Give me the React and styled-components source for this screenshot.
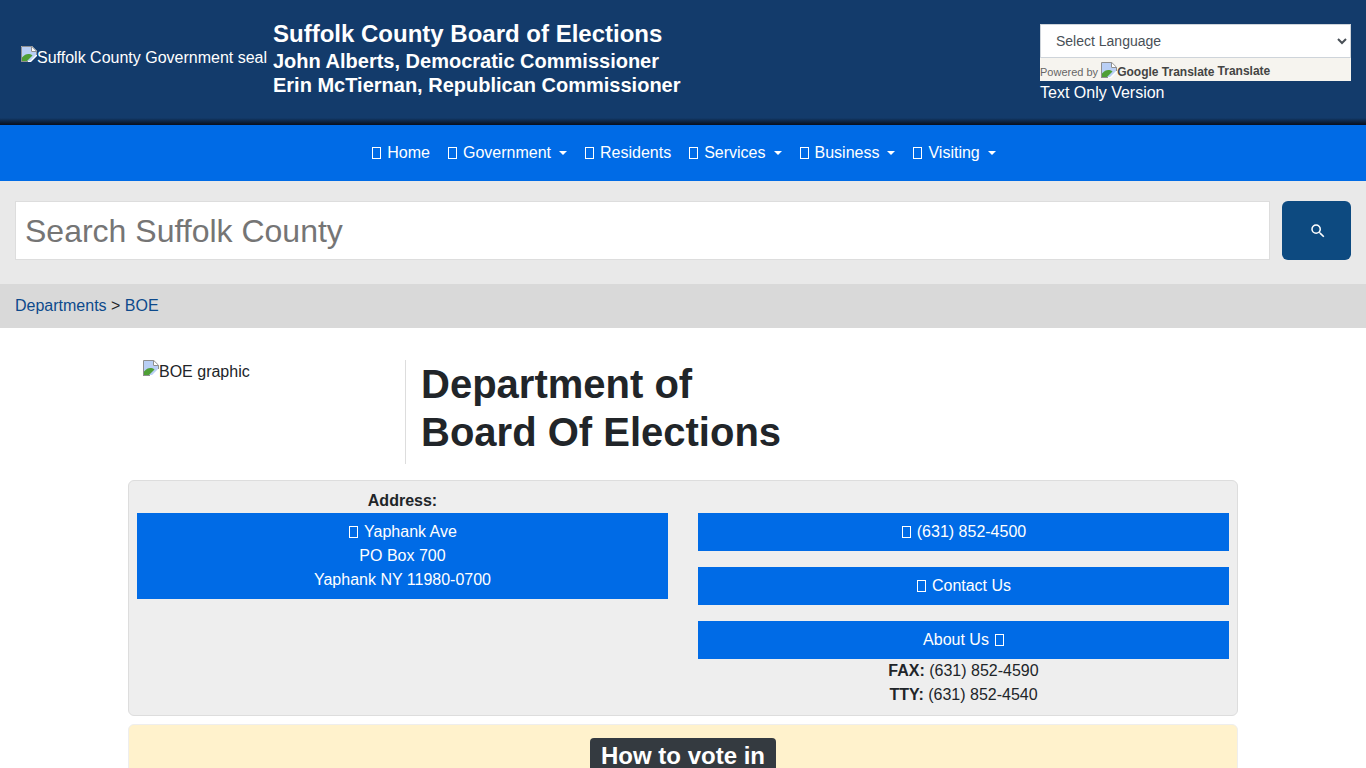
import React from "react"
import styled, { createGlobalStyle } from "styled-components"

const NAV_ITEMS = [
  { label: "Home" },
  { label: "Government", caret: true },
  { label: "Residents" },
  { label: "Services", caret: true },
  { label: "Business", caret: true },
  { label: "Visiting", caret: true },
]

// the browser's broken image marker, the reference has no loaded pictures
const BrokenImage = () => (
  <BrokenIcon viewBox="0 0 16 16" aria-hidden="true">
    <path d="M0 0h11l5 5v5l-6 6H0z" fill="#fff" />
    <path d="M1 1h9v5h5v3l-6 6H1z" fill="#b9cff5" />
    <path d="M1 15v-3.500C3.500 8.500 6 7.500 8.500 8c1.200.3 2 .8 3 1.500L6 15z" fill="#4f9f35" />
    <path d="M.5 16V.5h10.300l4.700 4.700V9M10.500 .5v5h5" fill="none" stroke="#8f8f8f" />
    <path d="M.5 15.500H7" fill="none" stroke="#8f8f8f" />
  </BrokenIcon>
)

const App = () => {
  return (
    <Page>
      <GlobalStyle />
      <Header>
        <Brand>
          <Seal>
            <BrokenImage />
            Suffolk County Government seal
          </Seal>
          <Titles>
            <Title>Suffolk County Board of Elections</Title>
            <Subtitle>John Alberts, Democratic Commissioner</Subtitle>
            <Subtitle>Erin McTiernan, Republican Commissioner</Subtitle>
          </Titles>
        </Brand>
        <HeaderTools>
          <LanguageSelect defaultValue="">
            <option value="">Select Language</option>
            <option value="es">Spanish</option>
          </LanguageSelect>
          <PoweredBy>
            Powered by <BrokenImage />
            <strong>Google Translate</strong> <TranslateWord>Translate</TranslateWord>
          </PoweredBy>
          <TextOnly href="#">Text Only Version</TextOnly>
        </HeaderTools>
      </Header>

      <Nav>
        {NAV_ITEMS.map((item) => (
          <NavLink key={item.label} href="#" $caret={item.caret}>
            <Tofu />
            {item.label}
          </NavLink>
        ))}
      </Nav>

      <SearchBar>
        <SearchInput placeholder="Search Suffolk County" />
        <SearchButton aria-label="Search">
          <svg width="18" height="18" viewBox="0 0 24 24" fill="#fff">
            <path d="M15.500 14h-.79l-.28-.27A6.471 6.471 0 0 0 16 9.500 6.500 6.500 0 1 0 9.500 16c1.610 0 3.090-.59 4.230-1.570l.27.28v.79l5 4.990L20.490 19l-4.990-5zm-6 0C7.010 14 5 11.990 5 9.500S7.010 5 9.500 5 14 7.010 14 9.500 11.990 14 9.500 14z" />
          </svg>
        </SearchButton>
      </SearchBar>

      <Breadcrumb>
        <a href="#">Departments</a> &gt; <a href="#">BOE</a>
      </Breadcrumb>

      <Main>
        <DeptHeader>
          <DeptGraphic>
            <BrokenImage />
            BOE graphic
          </DeptGraphic>
          <DeptTitle>
            Department of
            <br />
            Board Of Elections
          </DeptTitle>
        </DeptHeader>

        <ContactCard>
          <Column>
            <AddressLabel>Address:</AddressLabel>
            <BlueLink href="#">
              <Tofu />
              Yaphank Ave
              <br />
              PO Box 700
              <br />
              Yaphank NY 11980-0700
            </BlueLink>
          </Column>
          <Column>
            <LinkStack>
              <BlueLink href="#">
                <Tofu />
                (631) 852-4500
              </BlueLink>
              <BlueLink href="#">
                <Tofu />
                Contact Us
              </BlueLink>
              <BlueLink href="#">
                About Us
                <Tofu $after />
              </BlueLink>
            </LinkStack>
            <div>
              <div>
                <b>FAX:</b> (631) 852-4590
              </div>
              <div>
                <b>TTY:</b> (631) 852-4540
              </div>
            </div>
          </Column>
        </ContactCard>

        <NoticeCard>
          <NoticeBadge>How to vote in</NoticeBadge>
        </NoticeCard>
      </Main>
    </Page>
  )
}

export default App

const GlobalStyle = createGlobalStyle`
  html, body {
    margin: 0;
    padding: 0;
    background: #fff;
  }
  * {
    box-sizing: border-box;
  }
`

const Page = styled.div`
  height: 768px;
  overflow: hidden;
  font-family: "Liberation Sans", Arial, sans-serif;
  font-size: 16px;
  line-height: 24px;
  color: #212529;
`

const Header = styled.header`
  display: flex;
  justify-content: space-between;
  align-items: flex-start;
  height: 125px;
  padding: 24px 15px 0 21px;
  background: linear-gradient(#133b6b 118px, #0a1a30 123px, #0a0f1c 125px);
  color: #fff;
`

const Brand = styled.div`
  display: flex;
  align-items: center;
  height: 72px;
`

const BrokenIcon = styled.svg`
  display: inline-block;
  width: 16px;
  height: 16px;
  vertical-align: 1px;
`

const Seal = styled.div`
  width: 252px;
  margin-top: -4px;
  white-space: nowrap;
`

const Titles = styled.div`
  display: flex;
  flex-direction: column;
  font-weight: bold;
`

const Title = styled.div`
  font-size: 24px;
  line-height: 24px;
  margin-top: -2px;
  margin-bottom: 3px;
`

const Subtitle = styled.div`
  font-size: 20px;
  line-height: 24px;
`

const HeaderTools = styled.div`
  display: flex;
  flex-direction: column;
  width: 311px;
`

const LanguageSelect = styled.select`
  width: 100%;
  height: 34px;
  padding: 0 11px;
  background: #fff;
  border: 1px solid #ced4da;
  color: #495057;
  font-family: inherit;
  font-size: 14px;
`

const PoweredBy = styled.div`
  height: 23px;
  background: #f6f4ef;
  color: #666;
  font-size: 11px;
  line-height: 27px;
  white-space: nowrap;
  strong {
    color: #444;
    font-size: 12px;
  }
  svg {
    vertical-align: -2px;
  }
`

const TranslateWord = styled.strong`
  vertical-align: 1px;
`

const TextOnly = styled.a`
  color: #fff;
  text-decoration: none;
`

const Nav = styled.nav`
  display: flex;
  justify-content: center;
  align-items: center;
  height: 56px;
  background: #006be6;
`

const NavLink = styled.a`
  display: block;
  padding: 8px;
  margin-left: 1px;
  color: #fff;
  text-decoration: none;
  white-space: nowrap;
  ${(p) =>
    p.$caret &&
    `
    &::after {
      content: "";
      display: inline-block;
      margin-left: 8px;
      vertical-align: 3px;
      border-top: 4.800px solid #fff;
      border-right: 4.800px solid transparent;
      border-left: 4.800px solid transparent;
    }
  `}
`

// missing icon font glyph, shows as an empty box in the reference
const Tofu = styled.span`
  display: inline-block;
  width: 9px;
  height: 12px;
  margin: ${(p) => (p.$after ? "0 0 0 6px" : "0 6px 0 1px")};
  border: 1px solid currentColor;
  vertical-align: -1px;
`

const SearchBar = styled.div`
  display: flex;
  gap: 12px;
  height: 103px;
  padding: 20px 15px 24px;
  background: #e9e9e9;
`

const SearchInput = styled.input`
  flex: 1;
  min-width: 0;
  height: 59px;
  padding: 2px 9px 0;
  background: #fff;
  border: 1px solid #ddd;
  font-family: inherit;
  font-size: 32px;
  color: #495057;
  &::placeholder {
    color: #757575;
    opacity: 1;
  }
`

const SearchButton = styled.button`
  display: flex;
  justify-content: center;
  align-items: center;
  width: 69px;
  height: 59px;
  padding: 0 0 0 2px;
  background: #0d4a80;
  border: 0;
  border-radius: 6px;
`

const Breadcrumb = styled.div`
  height: 44px;
  padding: 10px 15px;
  background: #d9d9d9;
  a {
    color: #0d4a8c;
    text-decoration: none;
  }
`

const Main = styled.main`
  width: 1110px;
  margin: 0 auto;
  padding-top: 32px;
`

const DeptHeader = styled.div`
  display: flex;
  height: 104px;
`

const DeptGraphic = styled.div`
  width: 263px;
  margin-left: 15px;
  border-right: 1px solid #ddd;
`

const DeptTitle = styled.h1`
  margin: 0;
  padding-left: 15px;
  font-size: 40px;
  line-height: 48px;
  font-weight: bold;
`

const ContactCard = styled.section`
  display: grid;
  grid-template-columns: 531px 531px;
  justify-content: space-between;
  height: 236px;
  margin-top: 16px;
  padding: 8px;
  background: #eee;
  border: 1px solid #ddd;
  border-radius: 6px;
`

const Column = styled.div`
  display: flex;
  flex-direction: column;
  text-align: center;
`

const AddressLabel = styled.b`
  display: block;
`

const LinkStack = styled.div`
  display: flex;
  flex-direction: column;
  gap: 16px;
  margin-top: 24px;
`

const BlueLink = styled.a`
  display: block;
  padding: 7px 8px;
  background: #006be6;
  color: #fff;
  text-decoration: none;
`

const NoticeCard = styled.section`
  height: 120px;
  margin-top: 8px;
  padding-top: 13px;
  background: #fff2cc;
  border: 1px solid #eee;
  border-radius: 6px;
  text-align: center;
`

const NoticeBadge = styled.span`
  display: inline-block;
  padding: 2px 11px;
  background: #343a40;
  border-radius: 4px;
  color: #fff;
  font-size: 24px;
  line-height: 32px;
  font-weight: bold;
`
